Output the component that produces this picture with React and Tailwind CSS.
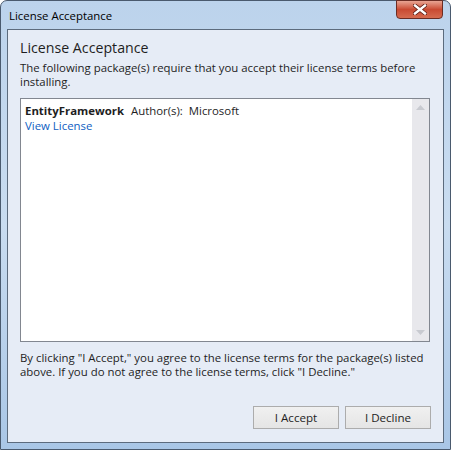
const CloseGlyph = () => (
  <svg width="14" height="11" viewBox="0 0 14 11">
    <path
      d="M2 1.5 L12 9.5 M12 1.5 L2 9.5"
      stroke="#5a1a12"
      strokeWidth="4"
      strokeLinecap="square"
    />
    <path
      d="M2 1.5 L12 9.5 M12 1.5 L2 9.5"
      stroke="#ffffff"
      strokeWidth="2.4"
      strokeLinecap="square"
    />
  </svg>
);

const Arrow = ({ up }) => (
  <svg width="9" height="5" viewBox="0 0 9 5">
    <path d={up ? "M0 5 L4.5 0 L9 5 Z" : "M0 0 L4.5 5 L9 0 Z"} fill="#c8cad0" />
  </svg>
);

const DialogButton = ({ children }) => (
  <button
    type="button"
    className="w-[86px] h-[23px] border border-[#acacac] bg-gradient-to-b from-[#f0f0f0] to-[#e5e5e5] text-[11.6px] text-[#1e1e1e]"
  >
    {children}
  </button>
);

export default function App() {
  return (
    <div
      className="w-[451px] h-[450px] bg-white"
      style={{ fontFamily: '"Open Sans", "Noto Sans", sans-serif' }}
    >
      {/* WINDOW FRAME */}
      <div className="w-[451px] h-[450px] rounded-t-[7px] border border-[#4a5a6e] bg-gradient-to-b from-[#bcd3ec] via-[#c9dcf0] to-[#a9c6e6] flex flex-col px-[6px] pb-[6px]">
        {/* TITLE BAR */}
        <div className="h-[28px] flex items-start justify-between">
          <div className="pt-[7px] pl-[2px] text-[11.4px] text-black leading-[15px]">
            License Acceptance
          </div>
          <div className="w-[47px] h-[19px] mt-[-1px] mr-[1px] rounded-b-[4px] border border-[#6b2d24] bg-gradient-to-b from-[#e8a493] via-[#c94a32] to-[#d66b4f] flex items-center justify-center">
            <CloseGlyph />
          </div>
        </div>

        {/* CLIENT AREA */}
        <div className="flex-1 border border-[#5c6b7d] bg-[#e6ecf6] px-[12px] pt-[8px] pb-[13px] flex flex-col">
          <h1 className="text-[14.2px] leading-[20px] text-[#1e1e1e]">
            License Acceptance
          </h1>
          <p className="mt-[3px] text-[11.4px] leading-[14px] text-[#1e1e1e]">
            The following package(s) require that you accept their license terms
            before installing.
          </p>

          {/* PACKAGE LIST */}
          <div className="mt-[9px] h-[244px] w-[410px] border border-[#828790] bg-white flex">
            <div className="flex-1 px-[4px] pt-[4px] text-[11.4px] leading-[15px]">
              <div className="text-[#1e1e1e]">
                <span className="font-bold">EntityFramework</span>
                <span className="ml-[7px]">Author(s):&nbsp; Microsoft</span>
              </div>
              <a href="#" className="text-[#0f5ec2]">
                View License
              </a>
            </div>
            <div className="w-[17px] bg-[#e8e8ec] flex flex-col items-center justify-between py-[6px]">
              <Arrow up />
              <Arrow />
            </div>
          </div>

          <p className="mt-[9px] text-[11.4px] leading-[14px] text-[#1e1e1e]">
            By clicking "I Accept," you agree to the license terms for the
            package(s) listed above. If you do not agree to the license terms,
            click "I Decline."
          </p>

          <div className="mt-auto flex justify-end gap-[6px]">
            <DialogButton>I Accept</DialogButton>
            <DialogButton>I Decline</DialogButton>
          </div>
        </div>
      </div>
    </div>
  );
}
